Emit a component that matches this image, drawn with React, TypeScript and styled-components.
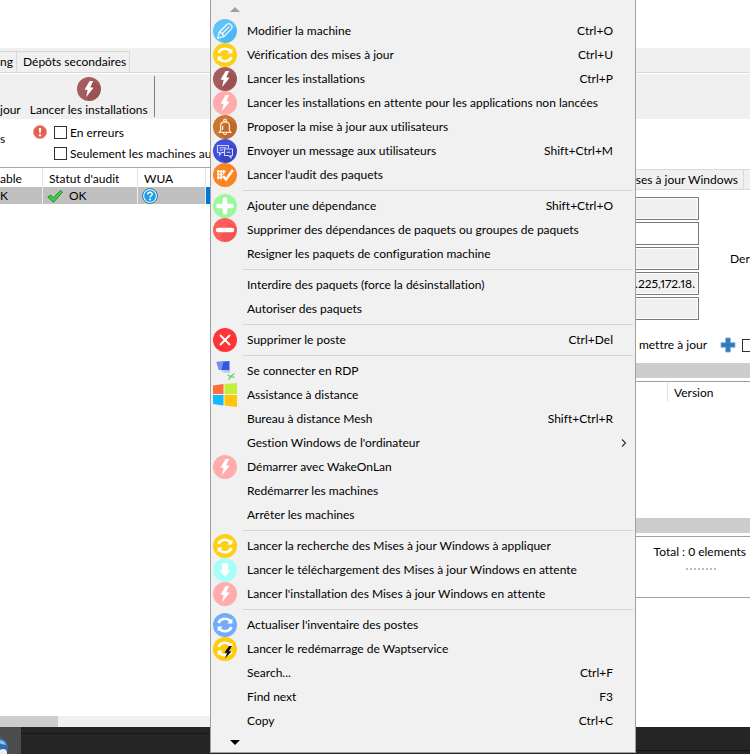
import React from "react";
import styled, { createGlobalStyle, css } from "styled-components";

const GlobalStyle = createGlobalStyle`
  * { box-sizing: border-box; }
  body { margin: 0; background: #fff; }
  body, button, input {
    font-family: Lato, "Segoe UI", sans-serif;
    font-size: 12px;
    font-variant-ligatures: none;
    line-height: 16px;
    color: #000;
  }
`;

/* ---------- icons ---------- */

type IconName =
  | "edit" | "sync" | "boltDark" | "boltPink" | "bell" | "chat" | "audit"
  | "add" | "remove" | "delete" | "rdp" | "windows" | "download" | "syncBlue" | "syncBolt";

const BOLT = "M12.6 4 7.6 12.4l3 .5L9 20.2l7.6-9.4-3.3-.5L16.2 4z";

const Bolt = () => <path d={BOLT} fill="#fff" />;

const SyncArrows = () => (
  <g fill="none" stroke="#fff" strokeWidth="2.6">
    <path d="M5.400 9.800C8 4.800 14.200 4.600 17.400 8" />
    <path d="M18.600 14.200C16 19.200 9.800 19.400 6.600 16" />
    <path d="M19.400 5.400v5.200h-5z" fill="#fff" stroke="none" />
    <path d="M4.600 18.600v-5.200h5z" fill="#fff" stroke="none" />
  </g>
);

const discs: Partial<Record<IconName, string>> = {
  edit: "#5fc3f7", sync: "#ffcf14", boltDark: "#a65c5c", boltPink: "#ffacac",
  bell: "#cd7632", chat: "#4150d8", audit: "#f98420", add: "#9df79d", remove: "#ff5c5c",
  delete: "#ff3535", download: "#a8fff7", syncBlue: "#73acff", syncBolt: "#ffcc0a",
};

const shades: Partial<Record<IconName, string>> = {
  edit: "#3fa9e6", boltDark: "#8f4848", bell: "#a95b20", chat: "#2b37ad", remove: "#e84a4a",
};

const glyphs: Record<IconName, React.ReactNode> = {
  edit: (
    <g fill="none" stroke="#effaff" strokeWidth="1.300">
      <path d="M4.800 19.200l1.400-6L14.200 5.200c2-1.800 6.200 2.200 4.400 4.400L10.700 17.700z" />
      <path d="M6.200 13.200c2 .2 4.200 2.400 4.500 4.500M9 15l7.500-7.500" />
    </g>
  ),
  sync: <SyncArrows />,
  boltDark: <Bolt />,
  boltPink: <Bolt />,
  bell: (
    <g fill="none" stroke="#ffe8d0" strokeWidth="1.200">
      <path d="M7.600 15.500V10.500C7.600 5.600 16.400 5.600 16.400 10.500V15.500l1.400 1.800H6.200z" />
      <circle cx="12" cy="5.400" r="1.300" />
      <path d="M10.300 17.800c.2 2.400 3.200 2.400 3.400 0M9.600 15v-4" />
    </g>
  ),
  chat: (
    <g fill="none" stroke="#d3d8ff" strokeWidth="1.100">
      <path d="M11 13.500H8.500L6.500 16v-2.500H4.500v-7h11v3" />
      <path d="M11.500 10h8v6.500H18v2.200l-2.300-2.200h-4.200z" />
      <path d="M6.500 8.800h7M6.500 11h3.500M13.500 13.200h4" />
    </g>
  ),
  audit: (
    <g>
      <path d="M4 8.500h8.500M4 11.500h6M4 14.500h5.500M5.200 7v9.500M8 7v9.500M10.800 7v4" stroke="#fff" strokeWidth="1.300" fill="none" />
      <path d="M10 13l3 3.500L19.800 7" stroke="#fff" strokeWidth="2.400" fill="none" />
    </g>
  ),
  add: <path d="M12 5.500v13M5.500 12h13" stroke="#fff" strokeWidth="4.600" strokeLinecap="round" />,
  remove: <path d="M5 12h14" stroke="#fff" strokeWidth="4.600" strokeLinecap="round" />,
  delete: <path d="M7.500 7.500l9 9M16.500 7.500l-9 9" stroke="#fff" strokeWidth="1.900" strokeLinecap="round" />,
  rdp: (
    <g>
      <path d="M3.500 3 16.500 2v9.500L6 11z" fill="#3158dd" />
      <path d="M3.500 3 10.500 2.500 8.500 11 6 11z" fill="#7590ef" />
      <path d="M8 12l9-.3v2.300l-6.500-.5z" fill="#c3cbe0" />
      <path d="M14.500 16l3 1.500 4-3M15.500 20.500l2.500-3 3.500 1" stroke="#5bd95b" strokeWidth="1.300" fill="none" />
    </g>
  ),
  windows: (
    <g>
      <path d="M0 2.500 10.500 1v10H0z" fill="#ff6f3a" />
      <path d="M11.500 1 24 0v11H11.500z" fill="#c0f03a" />
      <path d="M0 12h10.500v10.500L0 21z" fill="#16b8fb" />
      <path d="M11.500 12H24v12l-12.500-1.500z" fill="#ffc60a" />
    </g>
  ),
  download: <path d="M9 5h6v7.500h2.700L12 19l-5.700-6.500H9z" fill="#fff" />,
  syncBlue: <SyncArrows />,
  syncBolt: (
    <g>
      <SyncArrows />
      <path d="M16 9l-4.500 6.500 2.500.5-2 5.500 6.500-7-2.500-.5L19 9z" fill="#111" />
    </g>
  ),
};

const IconSvg = styled.svg`
  display: block;
  width: 24px;
  height: 24px;
`;

const Icon = ({ name }: { name: IconName }) => (
  <IconSvg viewBox="0 0 24 24" aria-hidden="true">
    {discs[name] && <circle cx="12" cy="12" r="12" fill={discs[name]} />}
    {shades[name] && <path d="M16.200 5l7 4A12 12 0 0 1 12 24L7 19z" fill={shades[name]} opacity=".45" />}
    {glyphs[name]}
  </IconSvg>
);

/* ---------- application frame ---------- */

const Window = styled.div`
  position: relative;
  display: flex;
  flex-direction: column;
  min-height: 100vh;
  overflow: hidden;
  white-space: nowrap;
`;

const TopBand = styled.header`
  margin-top: 48px;
  background: #f0f0f0;
`;

const TabStrip = styled.div`
  display: flex;
  align-items: flex-end;
  height: 25px;
  border-bottom: 1px solid #d9d9d9;
`;

const Tab = styled.button`
  height: 21px;
  padding: 0 3px 0 6px;
  border: 1px solid #d9d9d9;
  border-width: 1px 1px 0 0;
  background: #f0f0f0;
`;

const FirstTab = styled(Tab)`
  width: 17px;
  padding: 0;
  text-align: left;
`;

const Toolbar = styled.div`
  display: flex;
  align-items: flex-end;
  height: 46px;
  border-top: 1px solid #fff;
`;

const ToolButton = styled.button`
  display: flex;
  flex-direction: column;
  align-items: center;
  padding: 0;
  border: 0;
  background: none;
`;

const InstallButton = styled(ToolButton)`
  margin-left: 9px;
`;

const ToolLabel = styled.span`
  height: 18px;
  padding-top: 1px;
`;

const ToolDivider = styled.span`
  width: 1px;
  height: 41px;
  margin: 0 0 2px 6px;
  background: #808080;
`;

const Body = styled.main`
  display: grid;
  grid-template-columns: 56% 1fr;
  flex: 1;
`;

const Machines = styled.section`
  display: flex;
  flex-direction: column;
  min-width: 0;
`;

const Filters = styled.div`
  display: grid;
  grid-template-columns: 33px 21px 1fr;
  grid-template-rows: 21px 21px;
  align-items: center;
  padding: 3px 0;
  height: 48px;
`;

const FilterTail = styled.span`
  grid-row: 1 / 3;
  padding-bottom: 8px;
`;

const CheckLabel = styled.label`
  display: flex;
  align-items: center;
  gap: 3px;
  grid-column: 3;
`;

const Check = styled.input`
  appearance: none;
  flex: none;
  width: 13px;
  height: 13px;
  margin: 0;
  border: 1px solid #333;
  background: #fff;
`;

const SmallSvg = styled.svg`
  display: block;
  flex: none;
  width: 16px;
  height: 16px;
`;

const Grid = styled.table`
  width: 100%;
  table-layout: fixed;
  border-collapse: separate;
  border-spacing: 0;
  border-top: 1px solid #a8a8a8;
`;

const HeadCell = styled.th`
  height: 19px;
  padding: 2px 0 0 6px;
  border-right: 1px solid #e2e2e2;
  font-weight: 400;
  text-align: left;

  &:first-child { padding-left: 0; }
`;

const Cell = styled.td<{ $active?: boolean }>`
  height: 17px;
  padding: 0 0 0 4px;
  border-right: 1px solid #ececec;
  background: ${(p) => (p.$active ? "#0078d7" : "#c0c0c0")};

  &:first-child { padding: 0; }
`;

const CellLine = styled.span`
  display: flex;
  align-items: center;
  gap: 6px;
  height: 17px;
`;

const ScrollTrack = styled.div`
  height: 11px;
  margin-top: auto;
  background: #f0f0f0;
`;

const ScrollThumb = styled.div`
  width: 58px;
  height: 11px;
  background: #cdcdcd;
`;

/* ---------- details ---------- */

const Details = styled.section`
  display: flex;
  flex-direction: column;
  min-width: 0;
  padding-top: 50px;
  overflow: hidden;
`;

const DetailTabs = styled.div`
  display: flex;
  justify-content: flex-end;
  height: 21px;
  border: 1px solid #d9d9d9;
  border-width: 1px 0;
`;

const DetailTab = styled.button`
  padding: 0 5px;
  border: 0;
  border-right: 1px solid #d9d9d9;
  background: #f0f0f0;
`;

const DetailTabEdge = styled.span`
  width: 6px;
  background: #f0f0f0;
`;

const Fields = styled.div`
  display: grid;
  grid-template-columns: 1fr 20px;
  grid-template-rows: repeat(5, 23px);
  gap: 2px 31px;
  align-items: center;
  margin-top: 7px;
`;

const Field = styled.input`
  grid-column: 1;
  width: 100%;
  height: 23px;
  padding: 0 3px;
  border: 1px solid #7a7a7a;
  outline: 1px solid #fff;
  outline-offset: -2px;
  background: #f0f0f0;
  font-variant-numeric: proportional-nums;
  text-align: right;

  &:enabled:not(:read-only) { background: #fff; }
`;

const FieldLabel = styled.span`
  grid-column: 2;
  grid-row: 3;
`;

const UpdateRow = styled.div`
  display: flex;
  justify-content: flex-end;
  align-items: center;
  height: 16px;
  margin: 17px -5px 10px 0;
`;

const PlusButton = styled.button`
  margin: 0 6px 0 13px;
  padding: 0;
  border: 0;
  background: none;
`;

const Splitter = styled.div`
  height: 15px;
  margin-bottom: 3px;
  background: #cdcdcd;
`;

const Packages = styled.table`
  width: 100%;
  border-spacing: 0;
  border-top: 1px solid #a0a0a0;
`;

const PackageHead = styled.th<{ $last?: boolean }>`
  height: 20px;
  padding: 2px 0 0 6px;
  font-weight: 400;
  text-align: left;
  ${(p) => p.$last && css`
    width: 83px;
    border-left: 1px solid #e2e2e2;
  `}
`;

const PackageBody = styled.div`
  height: 116px;
`;

const Summary = styled.footer`
  height: 62px;
  padding: 7px 4px 0 0;
  border: 1px solid #a0a0a0;
  border-width: 1px 0;
  text-align: right;
`;

const Grip = styled.div`
  width: 30px;
  margin: 8px 30px 0 auto;
  border-top: 2px dotted #bbb;
`;

/* ---------- task bar ---------- */

const TaskBar = styled.div`
  display: grid;
  grid-template-columns: 56% 1fr;
  height: 27px;
  background: #252525;
`;

const TaskLeft = styled.div`
  background: linear-gradient(#252525 6px, #181818 6px, #181818 7px, #252525 7px);
`;

const TaskRight = styled.div`
  background: linear-gradient(#252525 23px, #111 23px, #111 24px, #252525 24px);
`;

const TaskButton = styled.button`
  display: block;
  width: 21px;
  height: 27px;
  padding: 0;
  border: 0;
  background: #4c4c4e;
`;

const TaskIcon = styled.svg`
  display: block;
  width: 21px;
  height: 27px;
`;

/* ---------- context menu ---------- */

const Menu = styled.div`
  position: absolute;
  top: 0;
  left: 210px;
  width: 426px;
  border: 1px solid #a0a0a0;
  border-top: 0;
  background: #f1f1f1;
`;

const MenuScroll = styled.button`
  display: block;
  width: 100%;
  height: 19px;
  padding: 0 0 0 19px;
  border: 0;
  background: none;
`;

const Arrow = styled.svg`
  display: block;
  width: 10px;
  height: 5px;
`;

const MenuItem = styled.button`
  display: grid;
  grid-template-columns: 34px 1fr auto 22px;
  align-items: center;
  width: 100%;
  height: 24px;
  padding: 0 0 0 2px;
  border: 0;
  background: none;
  text-align: left;

  &:hover { background: #e2eefa; }
`;

const Chevron = styled.svg`
  width: 6px;
  height: 8px;
  margin-left: 8px;
`;

const MenuRule = styled.hr`
  height: 1px;
  margin: 3px 2px 3px 32px;
  border: 0;
  background: #d5d5d5;
`;

type Entry = { icon?: IconName; label: string; keys?: string; sub?: boolean };

const groups: Entry[][] = [
  [
    { icon: "edit", label: "Modifier la machine", keys: "Ctrl+O" },
    { icon: "sync", label: "Vérification des mises à jour", keys: "Ctrl+U" },
    { icon: "boltDark", label: "Lancer les installations", keys: "Ctrl+P" },
    { icon: "boltPink", label: "Lancer les installations en attente pour les applications non lancées" },
    { icon: "bell", label: "Proposer la mise à jour aux utilisateurs" },
    { icon: "chat", label: "Envoyer un message aux utilisateurs", keys: "Shift+Ctrl+M" },
    { icon: "audit", label: "Lancer l'audit des paquets" },
  ],
  [
    { icon: "add", label: "Ajouter une dépendance", keys: "Shift+Ctrl+O" },
    { icon: "remove", label: "Supprimer des dépendances de paquets ou groupes de paquets" },
    { label: "Resigner les paquets de configuration machine" },
  ],
  [
    { label: "Interdire des paquets (force la désinstallation)" },
    { label: "Autoriser des paquets" },
  ],
  [{ icon: "delete", label: "Supprimer le poste", keys: "Ctrl+Del" }],
  [
    { icon: "rdp", label: "Se connecter en RDP" },
    { icon: "windows", label: "Assistance à distance" },
    { label: "Bureau à distance Mesh", keys: "Shift+Ctrl+R" },
    { label: "Gestion Windows de l'ordinateur", sub: true },
    { icon: "boltPink", label: "Démarrer avec WakeOnLan" },
    { label: "Redémarrer les machines" },
    { label: "Arrêter les machines" },
  ],
  [
    { icon: "sync", label: "Lancer la recherche des Mises à jour Windows à appliquer" },
    { icon: "download", label: "Lancer le téléchargement des Mises à jour Windows en attente" },
    { icon: "boltPink", label: "Lancer l'installation des Mises à jour Windows en attente" },
  ],
  [
    { icon: "syncBlue", label: "Actualiser l'inventaire des postes" },
    { icon: "syncBolt", label: "Lancer le redémarrage de Waptservice" },
    { label: "Search...", keys: "Ctrl+F" },
    { label: "Find next", keys: "F3" },
    { label: "Copy", keys: "Ctrl+C" },
  ],
];

const ContextMenu = () => (
  <Menu role="menu">
    <MenuScroll aria-label="Défiler vers le haut">
      <Arrow viewBox="0 0 10 5"><path d="M0 5 5 0l5 5z" fill="#a0a0a0" /></Arrow>
    </MenuScroll>
    {groups.map((group, i) => (
      <React.Fragment key={i}>
        {i > 0 && <MenuRule />}
        {group.map((e) => (
          <MenuItem key={e.label} role="menuitem">
            <span>{e.icon && <Icon name={e.icon} />}</span>
            <span>{e.label}</span>
            <span>{e.keys}</span>
            {e.sub && (
              <Chevron viewBox="0 0 6 8"><path d="M1 .5 4.500 4 1 7.500" fill="none" stroke="#333" strokeWidth="1.200" /></Chevron>
            )}
          </MenuItem>
        ))}
      </React.Fragment>
    ))}
    <MenuScroll aria-label="Défiler vers le bas">
      <Arrow viewBox="0 0 10 5"><path d="M0 0h10L5 5z" fill="#000" /></Arrow>
    </MenuScroll>
  </Menu>
);

const App = () => (
  <Window>
    <GlobalStyle />
    <TopBand>
      <TabStrip>
        <FirstTab>ng</FirstTab>
        <Tab>Dépôts secondaires</Tab>
      </TabStrip>
      <Toolbar>
        <ToolButton><ToolLabel>jour</ToolLabel></ToolButton>
        <InstallButton>
          <Icon name="boltDark" />
          <ToolLabel>Lancer les installations</ToolLabel>
        </InstallButton>
        <ToolDivider />
      </Toolbar>
    </TopBand>
    <Body>
      <Machines>
        <Filters>
          <FilterTail>s</FilterTail>
          <SmallSvg viewBox="0 0 16 16" aria-hidden="true">
            <circle cx="7" cy="7" r="6.600" fill="#e4604f" stroke="#f0a096" />
            <path d="M5.800 3h2.400l-.5 5H6.300z" fill="#fff" />
            <circle cx="7" cy="10.300" r="1.200" fill="#fff" />
          </SmallSvg>
          <CheckLabel><Check type="checkbox" />En erreurs</CheckLabel>
          <CheckLabel><Check type="checkbox" />Seulement les machines au</CheckLabel>
        </Filters>
        <Grid>
          <colgroup>
            <col width="43" /><col width="95" /><col width="68" /><col />
          </colgroup>
          <thead>
            <tr><HeadCell>able</HeadCell><HeadCell>Statut d'audit</HeadCell><HeadCell>WUA</HeadCell><HeadCell /></tr>
          </thead>
          <tbody>
            <tr>
              <Cell><CellLine>K</CellLine></Cell>
              <Cell>
                <CellLine>
                  <SmallSvg viewBox="0 0 16 16" aria-hidden="true">
                    <path d="M.8 9.200 3.500 7l2.700 3L13.500 2.500l2 1.500L6.500 14.300z" fill="#43cf43" stroke="#14861b" strokeWidth=".9" />
                  </SmallSvg>
                  OK
                </CellLine>
              </Cell>
              <Cell>
                <CellLine>
                  <SmallSvg viewBox="0 0 16 16" aria-hidden="true">
                    <circle cx="8" cy="8" r="7.400" fill="#fff" stroke="#1b6fae" />
                    <circle cx="8" cy="8" r="5.900" fill="#1ea0e8" />
                    <path d="M5.900 6.500C5.900 3.600 10.200 3.700 10.200 6.200 10.200 7.800 8 7.700 8 9.600" fill="none" stroke="#fff" strokeWidth="1.500" />
                    <circle cx="8" cy="11.500" r="1" fill="#fff" />
                  </SmallSvg>
                </CellLine>
              </Cell>
              <Cell $active />
            </tr>
          </tbody>
        </Grid>
        <ScrollTrack><ScrollThumb /></ScrollTrack>
      </Machines>
      <Details>
        <DetailTabs>
          <DetailTab>ises à jour Windows</DetailTab>
          <DetailTabEdge />
        </DetailTabs>
        <Fields>
          <Field readOnly aria-label="Nom" />
          <Field aria-label="Description" />
          <Field readOnly aria-label="Système" />
          <Field readOnly aria-label="Adresses IP" defaultValue=".225,172.18." />
          <Field readOnly aria-label="Domaine" />
          <FieldLabel>Dern</FieldLabel>
        </Fields>
        <UpdateRow>
          <span>mettre à jour</span>
          <PlusButton aria-label="Ajouter">
            <SmallSvg viewBox="0 0 16 16">
              <path d="M5.700 1h4.600v4.700H15v4.600h-4.700V15H5.700v-4.700H1V5.700h4.700z" fill="#3179bd" stroke="#79a9d5" strokeWidth=".8" />
            </SmallSvg>
          </PlusButton>
          <Check type="checkbox" aria-label="Sélection" />
        </UpdateRow>
        <Splitter />
        <Packages>
          <thead><tr><PackageHead /><PackageHead $last>Version</PackageHead></tr></thead>
        </Packages>
        <PackageBody />
        <Splitter />
        <Summary>
          Total : 0 elements
          <Grip />
        </Summary>
      </Details>
    </Body>
    <TaskBar>
      <TaskLeft>
        <TaskButton aria-label="WAPT">
          <TaskIcon viewBox="0 0 21 27">
            <circle cx="-3" cy="21" r="11" fill="#2f6fae" />
            <path d="M-3 14c4-2 8 0 9 4l-5-1z" fill="#8fc0e8" />
            <circle cx="3" cy="26" r="4" fill="#e8eff8" />
          </TaskIcon>
        </TaskButton>
      </TaskLeft>
      <TaskRight />
    </TaskBar>
    <ContextMenu />
  </Window>
);

export default App;
